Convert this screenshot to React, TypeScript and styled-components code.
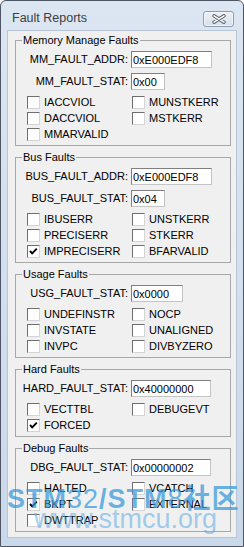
import React from "react";
import styled, { createGlobalStyle } from "styled-components";

type Field = { label: string; value: string; width: number };
type Flag = { name: string; checked?: boolean };
type Group = { title: string; fields: Field[]; flags: Flag[] };

const groups: Group[] = [
  {
    title: "Memory Manage Faults",
    fields: [
      { label: "MM_FAULT_ADDR:", value: "0xE000EDF8", width: 81 },
      { label: "MM_FAULT_STAT:", value: "0x00", width: 34 },
    ],
    flags: [
      { name: "IACCVIOL" },
      { name: "MUNSTKERR" },
      { name: "DACCVIOL" },
      { name: "MSTKERR" },
      { name: "MMARVALID" },
    ],
  },
  {
    title: "Bus Faults",
    fields: [
      { label: "BUS_FAULT_ADDR:", value: "0xE000EDF8", width: 81 },
      { label: "BUS_FAULT_STAT:", value: "0x04", width: 34 },
    ],
    flags: [
      { name: "IBUSERR" },
      { name: "UNSTKERR" },
      { name: "PRECISERR" },
      { name: "STKERR" },
      { name: "IMPRECISERR", checked: true },
      { name: "BFARVALID" },
    ],
  },
  {
    title: "Usage Faults",
    fields: [{ label: "USG_FAULT_STAT:", value: "0x0000", width: 52 }],
    flags: [
      { name: "UNDEFINSTR" },
      { name: "NOCP" },
      { name: "INVSTATE" },
      { name: "UNALIGNED" },
      { name: "INVPC" },
      { name: "DIVBYZERO" },
    ],
  },
  {
    title: "Hard Faults",
    fields: [{ label: "HARD_FAULT_STAT:", value: "0x40000000", width: 80 }],
    flags: [{ name: "VECTTBL" }, { name: "DEBUGEVT" }, { name: "FORCED", checked: true }],
  },
  {
    title: "Debug Faults",
    fields: [{ label: "DBG_FAULT_STAT:", value: "0x00000002", width: 80 }],
    flags: [
      { name: "HALTED" },
      { name: "VCATCH" },
      { name: "BKPT", checked: true },
      { name: "EXTERNAL" },
      { name: "DWTTRAP" },
    ],
  },
];

const GlobalStyle = createGlobalStyle`
  html, body {
    margin: 0;
    padding: 0;
    background: #ffffff;
  }
  body {
    font-family: "Liberation Sans", Arial, sans-serif;
  }
`;

const Window = styled.div`
  position: relative;
  box-sizing: border-box;
  width: 244px;
  height: 547px;
  display: flex;
  flex-direction: column;
  border: 1px solid #4e5663;
  border-radius: 6px 6px 0 0;
  background: linear-gradient(#dce6f2, #c9d8ea);
  overflow: hidden;
`;

const TitleBar = styled.div`
  height: 29px;
  display: flex;
  align-items: flex-start;
  justify-content: space-between;
  flex-shrink: 0;
`;

const Title = styled.span`
  margin: 10px 0 0 11px;
  font-size: 12.5px;
  line-height: 15px;
  color: #3d3d3d;
`;

const CloseButton = styled.div`
  box-sizing: border-box;
  width: 31px;
  height: 16px;
  margin: 10px 9px 0 0;
  display: flex;
  align-items: center;
  justify-content: center;
  border: 1px solid #8d9cb0;
  border-radius: 3px;
  background: linear-gradient(#eef2f7, #d7dfea);
  box-shadow: inset 0 0 0 1px rgba(255, 255, 255, 0.6);
`;

const Client = styled.div`
  flex: 1;
  margin: 0 6px 8px;
  padding-top: 3px;
  border: 1px solid #b7c5d6;
  background: #f0f0f0;
  display: flex;
  flex-direction: column;
  gap: 5px;
`;

const GroupBox = styled.fieldset`
  margin: 0 5px 0 7px;
  padding: 5px 0 3px;
  border: 1px solid #a7a7a7;
  min-width: 0;
`;

const Legend = styled.legend`
  margin-left: 6px;
  padding: 0 1px;
  font-size: 11px;
  line-height: 12px;
  color: #000;
`;

const Fields = styled.div`
  display: flex;
  flex-direction: column;
  gap: 5px;
`;

const FieldRow = styled.div`
  display: grid;
  grid-template-columns: 112px auto;
  column-gap: 3px;
  align-items: center;
  height: 17px;
`;

const FieldLabel = styled.span`
  text-align: right;
  font-size: 11px;
  line-height: 17px;
  color: #000;
  white-space: nowrap;
`;

const TextBox = styled.input<{ $width: number }>`
  box-sizing: border-box;
  width: ${(p) => p.$width}px;
  height: 17px;
  margin: 0;
  padding: 0 1px;
  border: 1px solid;
  border-color: #7f7f7f #c4c4c4 #c4c4c4 #7f7f7f;
  background: #fff;
  font-family: "Liberation Sans", Arial, sans-serif;
  font-size: 11px;
  color: #000;
  outline: none;
`;

const CheckGrid = styled.div`
  display: grid;
  grid-template-columns: 105px 1fr;
  grid-auto-rows: 16px;
  margin-top: 4px;
  padding-left: 11px;
`;

const CheckItem = styled.label`
  display: flex;
  align-items: center;
  gap: 4px;
`;

const CheckBox = styled.span<{ $checked?: boolean }>`
  box-sizing: border-box;
  width: 13px;
  height: 13px;
  flex-shrink: 0;
  display: flex;
  align-items: center;
  justify-content: center;
  border: 1px solid;
  border-color: #6f6f6f #d4d4d4 #d4d4d4 #6f6f6f;
  background: #fff;
`;

const CheckLabel = styled.span`
  font-size: 11px;
  line-height: 16px;
  color: #000;
  white-space: nowrap;
`;

const Watermark = styled.div`
  position: absolute;
  left: 6px;
  top: 485px;
  display: flex;
  flex-direction: column;
  pointer-events: none;
`;

const WmBrand = styled.div`
  font-family: "Liberation Sans", "Noto Sans CJK SC", sans-serif;
  font-size: 27px;
  line-height: 27px;
  letter-spacing: 1px;
  color: rgba(52, 152, 218, 0.72);
  white-space: nowrap;
`;

const WmBold = styled.span`
  font-weight: 700;
`;

const WmThin = styled.span`
  font-weight: 400;
`;

const WmSite = styled.div`
  margin-top: -7px;
  padding-left: 27px;
  font-family: "Liberation Sans", Arial, sans-serif;
  font-size: 27px;
  line-height: 27px;
  color: rgba(90, 170, 226, 0.55);
  white-space: nowrap;
`;

function CloseGlyph() {
  return (
    <svg width="14" height="10" viewBox="0 0 14 10">
      <path d="M2 1.8 L12 8.2 M12 1.8 L2 8.2" stroke="#5d6571" strokeWidth="3.4" strokeLinecap="round" />
      <path d="M2 1.8 L12 8.2 M12 1.8 L2 8.2" stroke="#ffffff" strokeWidth="1.5" strokeLinecap="round" />
    </svg>
  );
}

function Tick() {
  return (
    <svg width="11" height="11" viewBox="0 0 11 11">
      <path d="M2 5 L4.2 7.4 L8.8 2.6" fill="none" stroke="#000" strokeWidth="1.9" />
    </svg>
  );
}

export default function App() {
  return (
    <>
      <GlobalStyle />
      <Window>
        <TitleBar>
          <Title>Fault Reports</Title>
          <CloseButton>
            <CloseGlyph />
          </CloseButton>
        </TitleBar>
        <Client>
          {groups.map((g) => (
            <GroupBox key={g.title}>
              <Legend>{g.title}</Legend>
              <Fields>
                {g.fields.map((f) => (
                  <FieldRow key={f.label}>
                    <FieldLabel>{f.label}</FieldLabel>
                    <TextBox $width={f.width} value={f.value} readOnly />
                  </FieldRow>
                ))}
              </Fields>
              <CheckGrid>
                {g.flags.map((fl) => (
                  <CheckItem key={fl.name}>
                    <CheckBox $checked={fl.checked}>{fl.checked && <Tick />}</CheckBox>
                    <CheckLabel>{fl.name}</CheckLabel>
                  </CheckItem>
                ))}
              </CheckGrid>
            </GroupBox>
          ))}
        </Client>
        <Watermark>
          <WmBrand>
            <WmBold>STM</WmBold>
            <WmThin>32</WmThin>
            <WmBold>/STM</WmBold>
            <WmThin>8</WmThin>
            <WmBold>社区</WmBold>
          </WmBrand>
          <WmSite>www.stmcu.org</WmSite>
        </Watermark>
      </Window>
    </>
  );
}
